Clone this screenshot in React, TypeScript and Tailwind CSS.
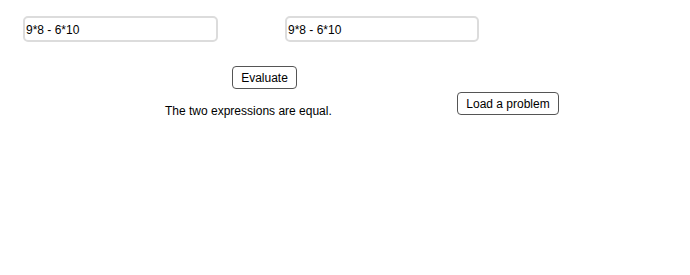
import React from "react";

export default function App() {
  return (
    <div className="w-[690px] h-[275px] bg-white text-black text-[12px] font-['Liberation_Sans',Arial,sans-serif] overflow-hidden">
      <div className="flex pt-[16px] pl-[23px]">
        <input
          readOnly
          defaultValue="9*8 - 6*10"
          className="w-[195px] h-[26px] border-2 border-[#dcdcdc] rounded-[5px] pl-[1px] pt-[1px] text-[12px] outline-none bg-white"
        />
        <input
          readOnly
          defaultValue="9*8 - 6*10"
          className="ml-[67px] w-[194px] h-[26px] border-2 border-[#dcdcdc] rounded-[5px] pl-[1px] pt-[1px] text-[12px] outline-none bg-white"
        />
      </div>
      <div className="pl-[232px] mt-[24px]">
        <button className="w-[65px] h-[23px] border border-[#555555] rounded-[4px] bg-white text-[12px] leading-none flex items-center justify-center">
          Evaluate
        </button>
      </div>
      <div className="flex pl-[165px]">
        <div className="w-[292px] mt-[15px] leading-[14px]">The two expressions are equal.</div>
        <button className="mt-[3px] w-[102px] h-[23px] border border-[#555555] rounded-[4px] bg-white text-[12px] leading-none flex items-center justify-center">
          Load a problem
        </button>
      </div>
    </div>
  );
}
